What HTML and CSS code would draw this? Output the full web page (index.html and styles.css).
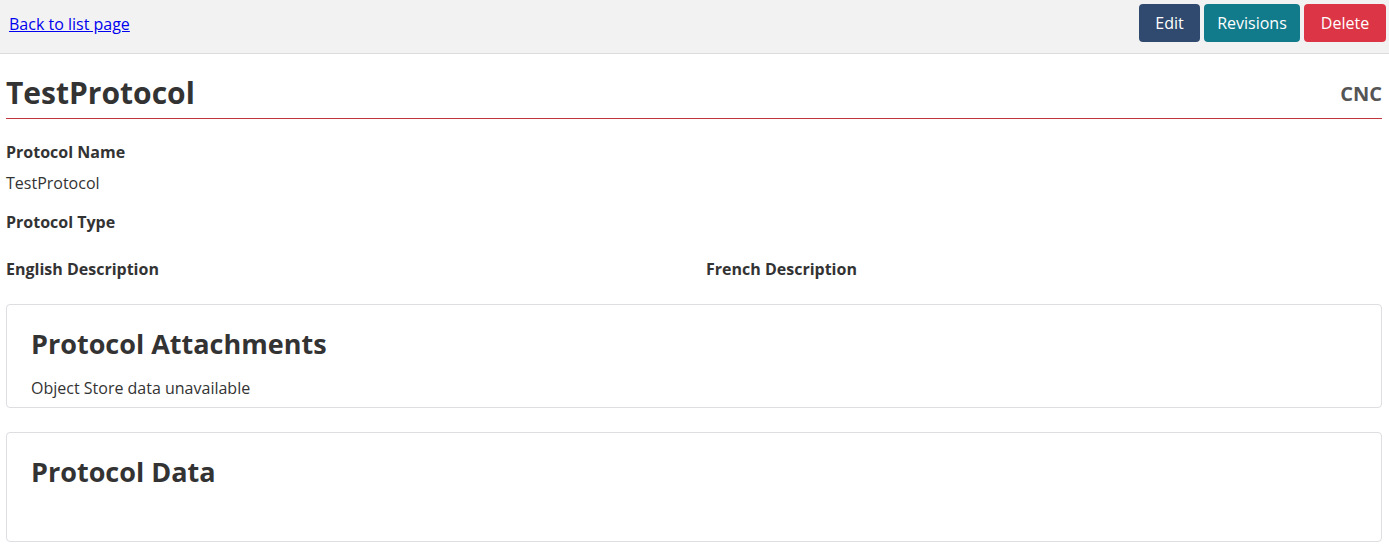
FILE: index.html
```html
<!DOCTYPE html>
<html>
<head>
<meta charset="utf-8">
<title>TestProtocol</title>
<link rel="stylesheet" href="styles.css">
</head>
<body>
<header class="topbar">
  <a class="back-link" href="#">Back to list page</a>
  <div class="actions">
    <button class="btn btn-edit">Edit</button>
    <button class="btn btn-revisions">Revisions</button>
    <button class="btn btn-delete">Delete</button>
  </div>
</header>
<main class="content">
  <div class="title-row">
    <h1 class="title">TestProtocol</h1>
    <span class="group">CNC</span>
  </div>
  <div class="field">
    <div class="label">Protocol Name</div>
    <div class="value">TestProtocol</div>
  </div>
  <div class="field">
    <div class="label">Protocol Type</div>
  </div>
  <div class="desc-grid">
    <div class="label">English Description</div>
    <div class="label">French Description</div>
  </div>
  <section class="card card-attachments">
    <h2 class="card-title">Protocol Attachments</h2>
    <p class="card-text">Object Store data unavailable</p>
  </section>
  <section class="card card-data">
    <h2 class="card-title">Protocol Data</h2>
  </section>
</main>
</body>
</html>
```
FILE: styles.css
```css
* { box-sizing: border-box; }
html, body {
  margin: 0;
  padding: 0;
  background: #fff;
  font-family: "Open Sans", "Noto Sans", sans-serif;
  color: #333;
  font-size: 16px;
}
.topbar {
  height: 54px;
  background: #f2f2f2;
  border-bottom: 1px solid #dcdcdc;
  display: flex;
  justify-content: space-between;
  align-items: flex-start;
  padding: 4px 3px 0 9px;
}
.back-link {
  color: #0000ee;
  text-decoration: underline;
  font-size: 16px;
  line-height: 22px;
  margin-top: 9px;
}
.actions {
  display: flex;
  gap: 4px;
}
.btn {
  font-family: "Open Sans", "Noto Sans", sans-serif;
  font-size: 16px;
  color: #fff;
  border: none;
  border-radius: 4px;
  height: 38px;
  padding: 0;
  line-height: 38px;
  cursor: pointer;
}
.btn-edit { background: #2f4a6e; width: 61px; }
.btn-revisions { background: #117a8b; width: 96px; }
.btn-delete { background: #dc3545; width: 82px; }
.content {
  padding: 0 7px 0 6px;
}
.title-row {
  display: flex;
  justify-content: space-between;
  align-items: center;
  border-bottom: 1px solid #c0363d;
  padding-top: 18px;
  padding-bottom: 4px;
}
.title {
  margin: 0;
  font-size: 30px;
  font-weight: 700;
  line-height: 42px;
}
.group {
  font-size: 20px;
  font-weight: 700;
  color: #555;
}
.field {
  margin-top: 21px;
}
.field + .field {
  margin-top: 15px;
}
.label {
  font-weight: 700;
  font-size: 16px;
  line-height: 24px;
}
.value {
  margin-top: 7px;
  line-height: 24px;
}
.desc-grid {
  display: grid;
  grid-template-columns: 1fr 1fr;
  column-gap: 24px;
  margin-top: 23px;
}
.card {
  border: 1px solid #dddde2;
  border-radius: 4px;
  padding: 0 24px;
}
.card-attachments {
  margin-top: 23px;
  height: 104px;
  padding-top: 21px;
}
.card-data {
  margin-top: 24px;
  height: 110px;
  padding-top: 21px;
}
.card-title {
  margin: 0;
  font-size: 27px;
  font-weight: 700;
  line-height: 36px;
}
.card-text {
  margin: 14px 0 0;
  line-height: 24px;
}
```
